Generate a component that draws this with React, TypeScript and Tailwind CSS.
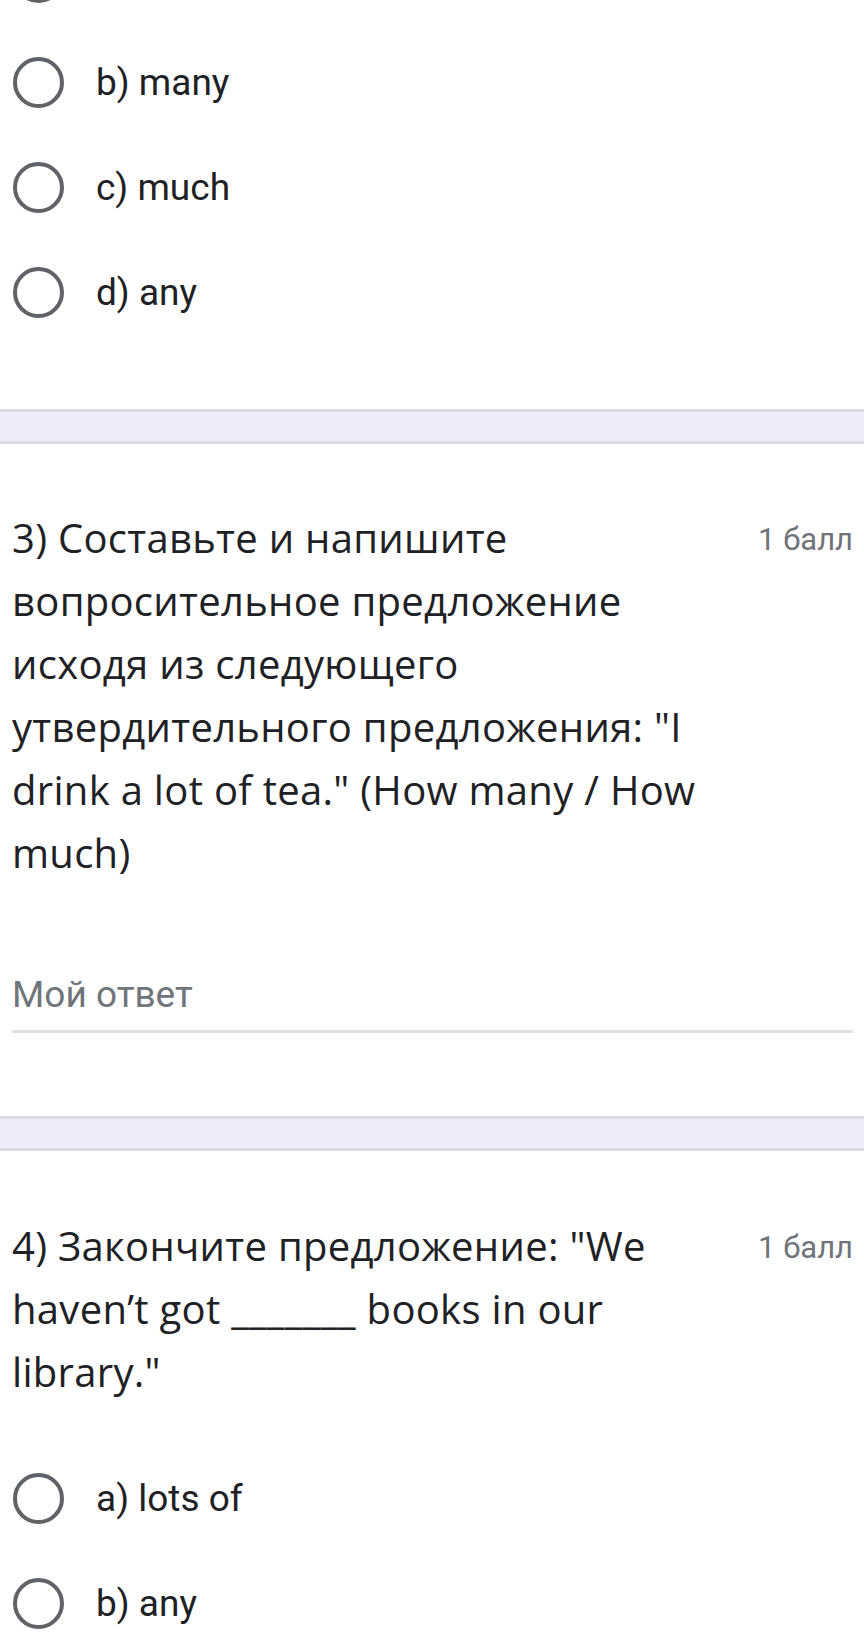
const titleFont = { fontFamily: '"Open Sans", "Noto Sans", sans-serif' };
const bodyFont = { fontFamily: 'Roboto, "Noto Sans", sans-serif' };

function Circle() {
    return <span className="h-[51px] w-[51px] shrink-0 rounded-full border-[4.5px] border-[#5f6368]" />;
}

function Radio({ label }: { label?: string }) {
    return (
        <div className="flex h-[105px] items-center pl-[13px]">
            <Circle />
            {label && (
                <span className="ml-[32px] text-[37px] leading-none text-[#202124]" style={bodyFont}>
                    {label}
                </span>
            )}
        </div>
    );
}

function Gap() {
    return <div className="h-[35px] border-y-[3px] border-[#dcdbe2] bg-[#efebf8]" />;
}

function QuestionTitle({ lines }: { lines: string[] }) {
    return (
        <div className="flex items-start justify-between pl-[12px] pr-[11px]">
            <div className="text-[40px] leading-[63px] tracking-[0.3px] text-[#202124]" style={titleFont}>
                {lines.map((l, i) => (
                    <div key={i} className="whitespace-nowrap">
                        {l}
                    </div>
                ))}
            </div>
            <span className="mt-[2px] text-[31px] leading-[63px] text-[#70737a]" style={bodyFont}>
                1 балл
            </span>
        </div>
    );
}

export default function App() {
    return (
        <div className="h-[1636px] w-[864px] overflow-hidden bg-white">
            <div className="-mt-[75px]">
                <Radio />
                <Radio label="b) many" />
                <Radio label="c) much" />
                <Radio label="d) any" />
            </div>

            <div className="mt-[64px]">
                <Gap />
            </div>

            <div className="pt-[62px] pb-[83px]">
                <QuestionTitle
                    lines={[
                        "3) Составьте и напишите",
                        "вопросительное предложение",
                        "исходя из следующего",
                        'утвердительного предложения: "I',
                        'drink a lot of tea." (How many / How',
                        "much)",
                    ]}
                />
                <div className="ml-[12px] mr-[11px] mt-[92px] border-b-[3px] border-[#e0e0e3] pb-[17px]">
                    <span className="text-[37px] leading-none text-[#70757a]" style={bodyFont}>
                        Мой ответ
                    </span>
                </div>
            </div>

            <Gap />

            <div className="pt-[63px]">
                <QuestionTitle
                    lines={[
                        '4) Закончите предложение: "We',
                        "haven’t got _______ books in our",
                        'library."',
                    ]}
                />
                <div className="mt-[43px]">
                    <Radio label="a) lots of" />
                    <Radio label="b) any" />
                </div>
            </div>
        </div>
    );
}
